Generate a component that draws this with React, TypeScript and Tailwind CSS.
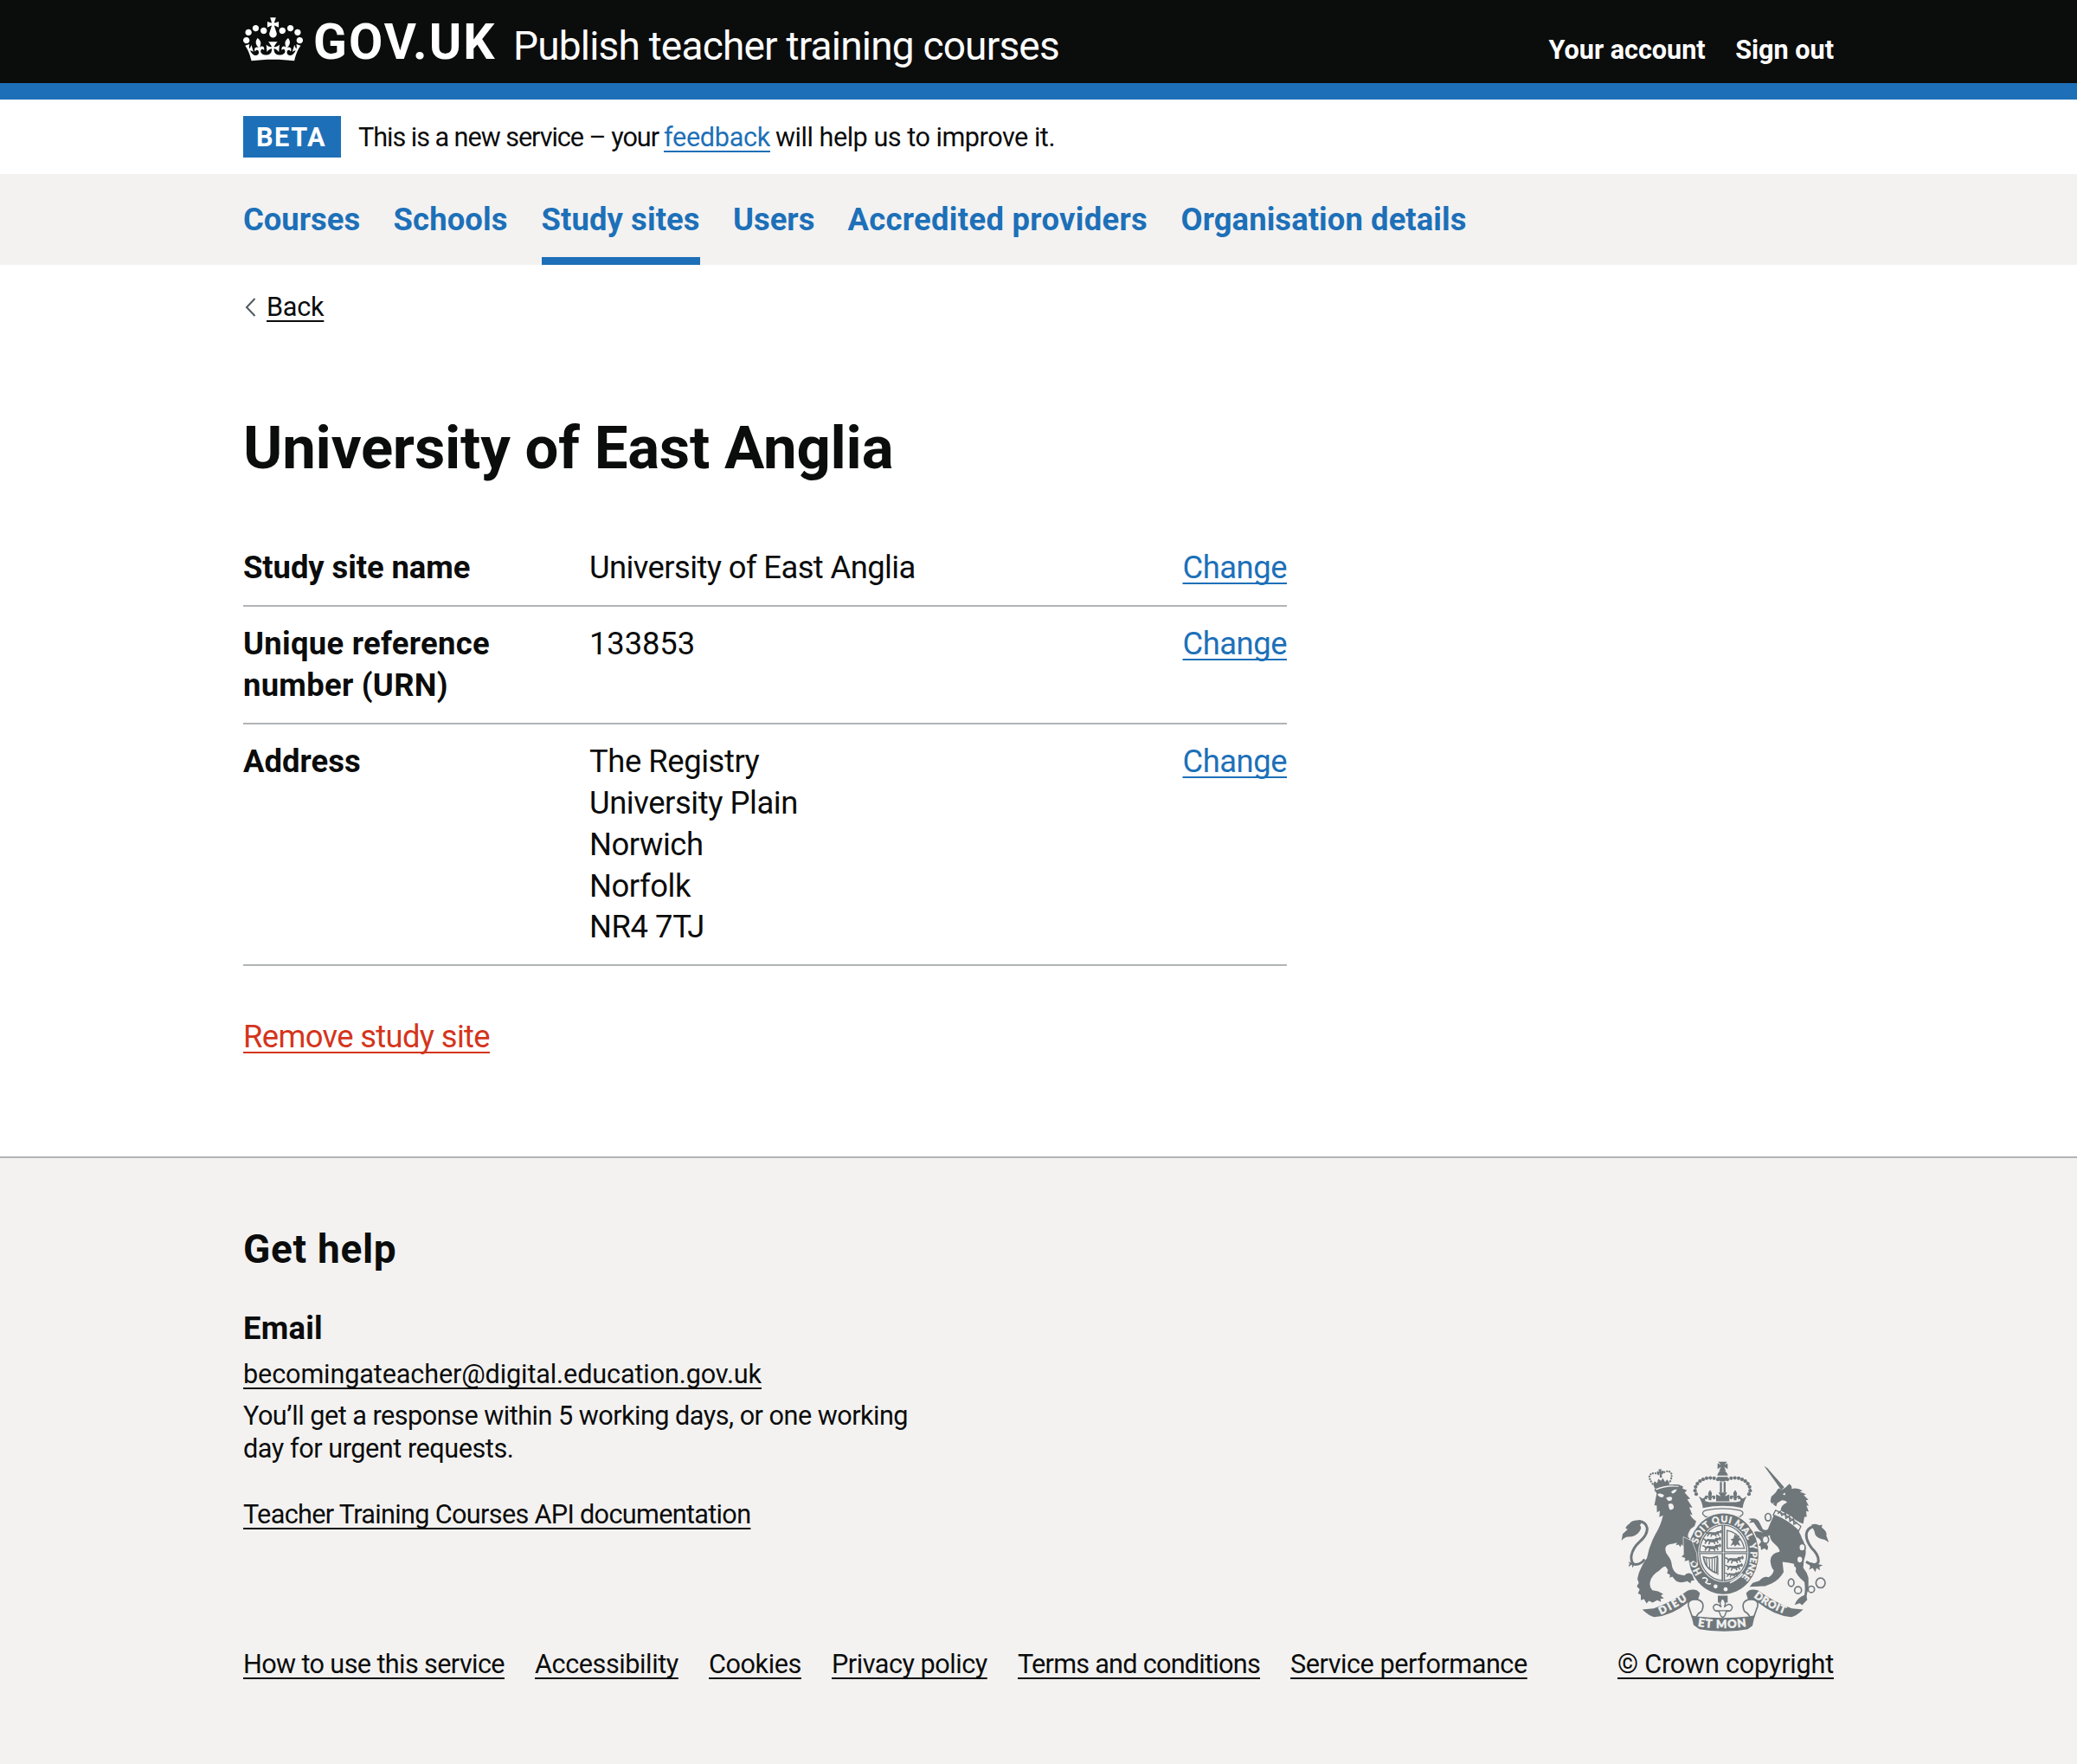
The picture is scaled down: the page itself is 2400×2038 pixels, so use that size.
import type { ReactNode } from 'react';

const ROYAL_CROWN =
  'M25 30.2c3.5 1.5 7.7-.2 9.1-3.7 1.5-3.6-.2-7.8-3.9-9.2-3.6-1.4-7.6.3-9.1 3.9-1.4 3.5.3 7.5 3.9 9zM9 39.5c3.6 1.5 7.8-.2 9.2-3.7 1.5-3.6-.2-7.8-3.9-9.1-3.6-1.5-7.6.2-9.1 3.8-1.4 3.5.3 7.5 3.8 9zM4.4 57.2c3.5 1.5 7.7-.2 9.1-3.8 1.5-3.6-.2-7.7-3.9-9.1-3.5-1.5-7.6.3-9.1 3.8-1.4 3.5.3 7.6 3.9 9.1zm38.3-21.4c3.5 1.5 7.7-.2 9.1-3.8 1.5-3.6-.2-7.7-3.9-9.1-3.6-1.5-7.6.3-9.1 3.8-1.3 3.6.4 7.7 3.9 9.1zm64.4-5.6c-3.6 1.5-7.8-.2-9.1-3.7-1.5-3.6.2-7.8 3.8-9.2 3.6-1.4 7.7.3 9.2 3.9 1.3 3.5-.4 7.5-3.9 9zm15.9 9.3c-3.6 1.5-7.7-.2-9.1-3.7-1.5-3.6.2-7.8 3.7-9.1 3.6-1.5 7.7.2 9.2 3.8 1.5 3.5-.3 7.5-3.8 9zm4.7 17.7c-3.6 1.5-7.8-.2-9.2-3.8-1.5-3.6.2-7.7 3.9-9.1 3.6-1.5 7.7.3 9.2 3.8 1.3 3.5-.4 7.6-3.9 9.1zM89.3 35.8c-3.6 1.5-7.8-.2-9.2-3.8-1.4-3.6.2-7.7 3.9-9.1 3.6-1.5 7.7.3 9.2 3.8 1.4 3.6-.3 7.7-3.9 9.1zM69.7 17.7l8.9 4.7V9.3l-8.9 2.8c-.2-.3-.5-.6-.9-.9L72.4 0H59.6l3.5 11.2c-.3.3-.6.5-.9.9l-8.8-2.8v13.1l8.8-4.7c.3.3.6.7.9.9l-5 15.4v.1c-.2.8-.4 1.6-.4 2.4 0 4.1 3.1 7.5 7 8.1h.2c.3 0 .7.1 1 .1.4 0 .7 0 1-.1h.2c4-.6 7.1-4.1 7.1-8.1 0-.8-.1-1.7-.4-2.4V34l-5.1-15.4c.4-.2.7-.6 1-.9zM66 92.8c16.9 0 32.8 1.1 47.1 3.2 4-16.9 8.9-26.7 14-33.5l-9.6-3.4c1 4.9 1.1 7.2 0 10.2-1.5-1.4-3-4.3-4.2-8.7L108.6 76c2.8-2 5-3.2 7.5-3.3-4.4 9.4-10 11.9-13.6 11.2-4.3-.8-6.3-4.6-5.6-7.9 1-4.7 5.7-5.9 8-.5 4.3-8.7-3-11.4-7.6-8.8 7.1-7.2 7.9-13.5 2.1-21.1-8 6.1-8.1 12.3-4.5 20.8-4.7-5.4-12.1-2.5-9.5 6.2 3.4-5.2 7.9-2 7.2 3.1-.6 4.3-6.4 7.8-13.5 7.2-10.3-.9-10.9-8-11.2-13.8 2.5-.5 7.1 1.8 11 7.3L80.2 60c-4.1 4.4-8 5.3-12.3 5.4 1.4-4.4 8-11.6 8-11.6H55.5s6.4 7.2 7.9 11.6c-4.2-.1-8-1-12.3-5.4l1.4 16.4c3.9-5.5 8.5-7.7 10.9-7.3-.3 5.8-.9 12.8-11.1 13.8-7.2.6-12.9-2.9-13.5-7.2-.7-5 3.8-8.3 7.1-3.1 2.7-8.7-4.6-11.6-9.4-6.2 3.7-8.5 3.6-14.7-4.6-20.8-5.8 7.6-5 13.9 2.2 21.1-4.7-2.6-11.9.1-7.7 8.8 2.3-5.5 7.1-4.2 8.1.5.7 3.3-1.3 7.1-5.7 7.9-3.5.7-9-1.8-13.5-11.2 2.5.1 4.7 1.3 7.5 3.3l-4.7-15.4c-1.2 4.4-2.7 7.2-4.3 8.7-1.1-3-.9-5.3 0-10.2l-9.5 3.4c5 6.9 9.9 16.7 14 33.5 14.8-2.1 30.8-3.2 47.7-3.2z';

const INK = '#6f777b';
const PAPER = '#f3f2f1';

const archDots: [number, number][] = [
  [376, 119], [363, 115], [350, 114], [337, 115], [325, 119], [314, 125], [305, 134], [299, 145], [297, 158], [301, 170],
];

const chain: [number, number, number, number][] = [
  [550, 250, 10, 13],
  [541, 328, 11, 13],
  [668, 355, 11, 13],
  [630, 477, 10, 13],
  [654, 503, 12, 12],
  [700, 500, 11, 11],
  [732, 478, 16, 17],
];

function Fleur({ x, y, s }: { x: number; y: number; s: number }) {
  return (
    <path
      transform={`translate(${x} ${y}) scale(${s})`}
      d="M0-20c6 7 8 13 3 22 6-8 14-6 14 1 0 5-5 8-9 5 2-2 2-4 0-5-3 0-4 5-4 9h-8c0-4-1-9-4-9-2 1-2 3 0 5-4 3-9 0-9-5 0-7 8-9 14-1-5-9-3-15 3-22z"
    />
  );
}

function Walker({ x, y, s = 1 }: { x: number; y: number; s?: number }) {
  return (
    <g transform={`translate(${x} ${y}) scale(${s})`} fill="none" stroke={INK} strokeWidth="5" strokeLinecap="round">
      <path d="M0 4q8-8 16 0t24-2M4 4l-6 9M16 5l-4 10M28 4l5 10M39 2l5 9M40 2q8-6 12-10q4 4 0 8" />
      <path d="M0 4q-3-7-10-7" />
      <path d="M8 2h26" strokeWidth="8" />
      <path d="M38-2h6" strokeWidth="9" />
    </g>
  );
}

function CoatOfArms() {
  return (
    <svg viewBox="40 56 720 590" className="h-[197px] w-[240px]" fill={INK} aria-hidden="true">
      <defs>
        <path id="garter-top" d="M305.6 343.3A94 109 0 0 1 482 336" />
        <path id="garter-right" d="M484.4 343.3A94 109 0 0 1 451 466" />
        <path id="garter-left" d="M321 444A94 109 0 0 1 301.5 388" />
        <path id="scroll-left" d="M178 588Q228 566 284 528" />
        <path id="scroll-right" d="M500 526Q550 566 616 588" />
        <path id="scroll-mid" d="M306 628Q392 642 480 627" />
      </defs>

      {/* lion */}
      <path d="M163 148q34-14 78-11l15 7-3 7 16 6-8 8 19 21-10 2 18 29-11-1 11 27-9-4q6 14 22 25l-6 17q-22 12-23 36l34 38q-8 20 7 44l-14-10-12 9-2-11-15 4 2-12-13-4 8-9q-3-10-17-22l-4 10-6-9-9 2 3-9-13 4q-22 1-26 13-4 14 8 28 12 14 14 36 4 20 21 29l22 4q8-10 20-7l18 10-8 4 5 10-11 1-3 9-11-7q-24 9-39-1l-13-15-9 4 1-11-10-4 3-12-8-12q-10 0-22 14-28 16-32 40-3 18 8 28l20 4 18 10-9 4 11 11-12 1 2 11-13-6-16 8-13-6-8 9-9-15-11 4 0-18-10-6 6-14-10-10 7-12-5-14 5-20q14-36 28-52 8-44 30-84 18-28 26-64l-13 6 2-22-10 5-1-24-8 0 8-42-8-10q2-14 16-12z" />
      <path d="M122 396q-12 18-32 18-16-3-14-30 5-28 30-50 26-22 25-46-4-22-30-24" fill="none" stroke={INK} strokeWidth="9" />
      <path d="M104 260q-28 0-34 12-24 18-6 20l-18 16-4 24q10-14 24-14 26 0 38-18 10-14 2-22 8-10 2-18zM64 404l24 8-8 14-2-12-12 8 4-12z" />
      <g transform="rotate(-8 178 120)">
        <path d="M150 134l6-12 8 8 6-14 8 8 8-8 6 14 8-8 6 12-3 12h-50z" />
        <g fill="none" stroke={INK} strokeWidth="7" strokeLinecap="round" strokeDasharray="0.1 9">
          <path d="M148 130q-20-36 12-36l18 8" />
          <path d="M210 130q20-36-12-36l-20 8" />
        </g>
        <path d="M174 84h12l-3 8 8-3v10l-8-2 1 16h-8l1-16-8 2v-10l8 3z" />
      </g>
      <g fill={PAPER}>
        <path d="M166 172q10-9 24 3l-4 5q-10 5-20-8zM214 162q10-10 20-8-4 12-16 14zM196 184q12-8 22-2l-3 10-10 2zM204 206q8-6 14-2 8 8 4 16-8 8-14 2z" />
        <path d="M160 152q36-16 80-10v3q-40-4-78 11z" />
      </g>

      {/* unicorn */}
      <path d="M536 72l12 8 58 66-10 10z" />
      <path d="M596 156l14-8 14-14q10 8 8 18 18-6 38 6l-10 4 22 8-8 4 16 16-9 1 10 20-8-2 8 22-9-2 2 20-8 0-4 24q-24-8-42-26l-36-20q-2-16 22-28-4-8-18-8l-16 10-4 12-11-8 5-6-8 4-6-7 3-17q16-12 20-22 8-14 15-1z" />
      <path d="M600 170l10-5-1 9z" fill={PAPER} />
      <path d="M572 238L552 285Q548 300 532 292L520 268Q512 250 482 256L492 262 484 270 500 268 512 286Q520 300 534 304 495 292 497 312L496 325 506 318Q524 324 526 336L516 348 524 350 526 364 538 358Q550 372 550 352L546 344 536 338Q532 326 528 318 545 322 556 312 556 330 575 345 590 356 590 370 560 375 558 400 560 425 570 435 566 450 552 458 535 452 520 470L497 478 486 491 540 489 562 480Q590 466 604 440L600 405Q625 408 640 412 640 440 662 462L676 475Q680 500 676 520 650 530 642 554L660 548 668 555 686 536Q680 520 690 500L690 460Q685 440 672 425 672 400 680 380 684 350 668 325 660 300 646 285 610 258 572 238Z" />
      <path d="M576 226q42 16 88 56l-8 16q-38-38-88-56z" fill={PAPER} stroke={INK} strokeWidth="4" />
      <path d="M584 238l8-8 6 14 12-8 2 18 12-8 2 18 12-8 2 18 10-4" fill="none" stroke={INK} strokeWidth="5" />
      <path d="M682 404q30 20 42 2 4-24-22-48-26-34-17-58 12-24 38-14" fill="none" stroke={INK} strokeWidth="9" />
      <path d="M700 276q16-6 28 2l10-2-2 10q20 14 16 28l9 24q-12-12-24-12-24-4-26-26zM690 406l50 10-12 6 2 12-12-8-4 14-9-14-13 6 4-10z" />
      <g fill={PAPER} stroke={INK} strokeWidth="5">
        {chain.map(([cx, cy, rx, ry]) => (
          <ellipse key={`${cx}-${cy}`} cx={cx} cy={cy} rx={rx} ry={ry} />
        ))}
      </g>
      <g fill={PAPER}>
        <ellipse cx="660" cy="397" rx="8" ry="10" />
        <ellipse cx="639" cy="430" rx="8" ry="9" />
        <ellipse cx="668" cy="355" rx="7" ry="9" />
      </g>

      {/* royal crown */}
      <path d="M377 58h31l-9 11 11-6v20l-12-7 6 15h-24l7-15-12 7V63l12 6z" />
      <path d="M374 106q2-17 18-17t19 17z M374 110h37l-10 16h-18z" />
      <path d="M383 128h7v36h-7zM396 128h7v36h-7z" />
      {archDots.map(([x, y]) => (
        <g key={`${x}-${y}`}>
          <circle cx={x} cy={y} r="6.3" />
          <circle cx={785 - x} cy={y} r="6.3" />
        </g>
      ))}
      <Fleur x={349} y={178} s={1.1} />
      <Fleur x={436} y={178} s={1.1} />
      <path d="M378 164h30l-8 14 16-7v24h-46v-24l16 7zM310 178l14 8 8-6 0 14 14 4h94l14-4 0-14 8 6 14-8q-12 22-14 40-70-14-138 0-2-18-14-40z" />
      <path d="M334 226q58-12 118 0 14 4 10 14l-10 9H334l-10-9q-3-10 10-14z" fill={PAPER} stroke={INK} strokeWidth="4" />

      {/* garter and shield */}
      <ellipse cx="395" cy="377" rx="126" ry="143" fill={PAPER} />
      <ellipse cx="395" cy="377" rx="122" ry="140" />
      <ellipse cx="395" cy="374" rx="87" ry="101" fill={PAPER} />
      <ellipse cx="395" cy="374" rx="82" ry="96" fill="none" stroke={INK} strokeWidth="4" />
      <path d="M389 278h12v194h-12zM312 368h166v10H312z" />
      <path d="M394 278h2v194h-2zM312 372h166v2H312z" fill={PAPER} />
      <Walker x={342} y={304} s={0.85} />
      <Walker x={334} y={328} s={0.95} />
      <Walker x={334} y={352} s={0.95} />
      <Walker x={412} y={394} s={0.95} />
      <Walker x={412} y={420} s={0.9} />
      <Walker x={410} y={446} s={0.75} />
      <path d="M408 296q46 8 60 62h-60z" fill="none" stroke={INK} strokeWidth="4" />
      <path d="M420 350l8-16-8-8 10-2 4-14 8 6 8-4-3 10 8 6-8 6 8 16-12-6-8 8-4-8z" />
      <path d="M326 388q24 8 48-2l-2 58q-40-14-46-56z" fill="none" stroke={INK} strokeWidth="5" />
      <path d="M336 392l2 24M346 394l2 34M356 394v42M365 392v48M376 390v60" fill="none" stroke={INK} strokeWidth="3.5" />
      <g fill={PAPER} stroke={PAPER} strokeWidth="1" className="font-['Lato'] text-[32px] font-black">
        <text>
          <textPath href="#garter-top" textLength="236">SOIT QUI MAL</textPath>
        </text>
        <text>
          <textPath href="#garter-right" textLength="124">Y PENSE</textPath>
        </text>
        <text>
          <textPath href="#garter-left" textLength="52">HO</textPath>
        </text>
      </g>
      <path d="M322 462q14-6 18 6l-6 8q8 8 18 4M418 478q28-14 44-32" fill="none" stroke={PAPER} strokeWidth="5" />
      <circle cx="368" cy="490" r="7" fill={PAPER} />
      <circle cx="403" cy="500" r="7" fill={PAPER} />
      <path d="M256 318l30 14 17 44 2 36-14-10-14 9-2-11-15 4 2-12-13-4 8-9z" stroke={PAPER} strokeWidth="2" />

      {/* motto scroll */}
      <path d="M114 570l40-4q64-22 118-62 30-10 42 10l-8 26-34 6q-56 46-116 50-14 0-42-26z" />
      <path d="M672 570l-40-4q-64-22-116-62-30-10-42 10l8 26 34 6q56 46 114 50 14 0 42-26z" />
      <g fill={PAPER} stroke={INK} strokeWidth="5">
        <path d="M306 536q-36-4-32 22l14 40q8 10 14-4 4-10 18-18 14-32-14-40z" />
        <path d="M482 536q36-4 32 22l-14 40q-8 10-14-4-4-10-18-18-14-32 14-40z" />
      </g>
      <path d="M284 590l18 4q88 10 182 0l20-4-8 36-16 12q-80 16-168 0l-20-14z" />
      <path d="M376 522h34v24h-34z" />
      <g fill={PAPER} stroke={INK} strokeWidth="4">
        <path d="M392 530q16 18 6 32 20-20 28 0-2 16-20 14l-6 16-7 6-7-6-6-16q-18 2-20-14 8-20 28 0-10-14 4-32zM370 574h46" />
      </g>
      <g fill={PAPER} stroke={PAPER} strokeWidth="1.5" className="font-['Lato'] text-[36px] font-black">
        <text>
          <textPath href="#scroll-left" textLength="106">DIEU</textPath>
        </text>
        <text>
          <textPath href="#scroll-right" textLength="122">DROIT</textPath>
        </text>
        <text className="text-[39px]">
          <textPath href="#scroll-mid" textLength="170">ET MON</textPath>
        </text>
      </g>
    </svg>
  );
}

function Link({ children, className = '' }: { children: ReactNode; className?: string }) {
  return (
    <a
      href="#"
      className={`whitespace-nowrap underline decoration-2 underline-offset-[5px] [text-decoration-skip-ink:none] ${className}`}
    >
      {children}
    </a>
  );
}

const navItems = [
  { label: 'Courses', cls: 'w-[135px]' },
  { label: 'Schools', cls: 'w-[132.5px] tracking-[0.004em]' },
  { label: 'Study sites', cls: 'w-[183px] tracking-[0.003em]', current: true },
  { label: 'Users', cls: 'w-[94px]' },
  { label: 'Accredited providers', cls: 'w-[346.5px] tracking-[0.0085em]' },
  { label: 'Organisation details', cls: 'w-[330px] tracking-[0.0023em]' },
];

const rows = [
  { key: ['Study site name'], keyCls: 'tracking-[-0.002em]', value: ['University of East Anglia'], valueCls: 'tracking-[-0.0165em]' },
  { key: ['Unique reference', 'number (URN)'], keyCls: 'tracking-[0.008em]', value: ['133853'], valueCls: 'tracking-[-0.003em]' },
  {
    key: ['Address'],
    keyCls: 'tracking-[0.001em]',
    value: ['The Registry', 'University Plain', 'Norwich', 'Norfolk', 'NR4 7TJ'],
    valueCls: 'tracking-[-0.012em]',
  },
];

const footerLinks = [
  { label: 'How to use this service', cls: 'w-[337px] tracking-[-0.0202em]' },
  { label: 'Accessibility', cls: 'w-[201px] tracking-[-0.014em]' },
  { label: 'Cookies', cls: 'w-[142px] tracking-[-0.014em]' },
  { label: 'Privacy policy', cls: 'w-[215px] tracking-[-0.016em]' },
  { label: 'Terms and conditions', cls: 'w-[315px] tracking-[-0.0243em]' },
  { label: 'Service performance', cls: 'tracking-[-0.015em]' },
];

export default function App() {
  return (
    <div className="flex h-[2038px] flex-col overflow-hidden bg-white font-['Roboto',sans-serif] text-[#0b0c0c]">
      <header className="h-[115px] border-b-[19px] border-[#1d70b8] bg-[#0b0c0c] text-white">
        <div className="mx-auto flex w-[1838px] items-start">
          <svg viewBox="0 0 132 97" className="mt-5 h-[51px] w-[69px]" fill="currentColor" aria-hidden="true">
            <path fillRule="evenodd" d={ROYAL_CROWN} />
          </svg>
          <span className="ml-3 mt-[19px] w-[231px] text-[57px] font-bold leading-[60px] tracking-[0.037em]">GOV.UK</span>
          <span className="mt-7 whitespace-nowrap text-[46px] leading-[50px] tracking-[-0.0175em]">Publish teacher training courses</span>
          <nav className="ml-auto mt-[38px] flex gap-[34.5px] text-[30.63px] font-bold leading-[40px] tracking-[-0.001em]">
            <a href="#">Your account</a>
            <a href="#">Sign out</a>
          </nav>
        </div>
      </header>

      <div className="mx-auto flex h-[86px] w-[1838px] items-start pt-[19px] text-[30.63px] leading-[48px]">
        <strong className="h-12 w-[113px] bg-[#1d70b8] pl-[15px] pt-px font-bold tracking-[0.05em] text-white">BETA</strong>
        <span className="ml-5 w-[353px] whitespace-nowrap pt-px tracking-[-0.0343em]">This is a new service – your</span>
        <Link className="w-[129px] pt-px tracking-[-0.01em] text-[#1d70b8]">feedback</Link>
        <span className="whitespace-nowrap pt-px tracking-[-0.016em]">will help us to improve it.</span>
      </div>

      <nav className="h-[105px] bg-[#f3f2f1] text-[36.4px] font-bold leading-[40px] text-[#1d70b8]">
        <div className="mx-auto flex h-full w-[1838px] gap-[38.5px]">
          {navItems.map((item) => (
            <a
              key={item.label}
              href="#"
              className={`h-full whitespace-nowrap pt-[33px] ${item.cls} ${item.current ? 'border-b-[9px] border-[#1d70b8]' : ''}`}
            >
              {item.label}
            </a>
          ))}
        </div>
      </nav>

      <main className="mx-auto h-[1030px] w-[1838px]">
        <div className="flex items-center pt-[29px] text-[30.63px] leading-[40px]">
          <svg viewBox="0 0 13 22" className="-mt-px ml-[2px] mr-3 h-[22px] w-[13px]" fill="none" stroke="#505a5f" strokeWidth="2">
            <path d="M11.5 1 2 11l9.5 10" />
          </svg>
          <Link className="tracking-[-0.008em]">Back</Link>
        </div>

        <h1 className="mt-[105px] text-[68.9px] font-bold leading-[76px] tracking-[-0.003em]">University of East Anglia</h1>

        <dl className="mt-[76.3px] w-[1206px] text-[36.4px] leading-[47.87px]">
          {rows.map((row, i) => (
            <div key={row.key[0]} className={`flex border-b-2 border-[#b1b4b6] pb-[19px] ${i > 0 ? 'pt-[19px]' : ''}`}>
              <dt className={`w-[400px] font-bold ${row.keyCls}`}>
                {row.key.map((line) => (
                  <div key={line}>{line}</div>
                ))}
              </dt>
              <dd className={row.valueCls}>
                {row.value.map((line) => (
                  <div key={line}>{line}</div>
                ))}
              </dd>
              <dd className="ml-auto">
                <Link className="tracking-[-0.0131em] text-[#1d70b8]">Change</Link>
              </dd>
            </div>
          ))}
        </dl>

        <div className="mt-[58px] text-[36.4px] leading-[48px]">
          <Link className="tracking-[-0.0181em] text-[#d4351c]">Remove study site</Link>
        </div>
      </main>

      <footer className="flex-1 border-t-2 border-[#b1b4b6] bg-[#f3f2f1]">
        <div className="mx-auto w-[1838px] pt-[76px] text-[30.63px] leading-[38.3px]">
          <h2 className="text-[46px] font-bold leading-[58px] tracking-[0.015em]">Get help</h2>
          <h3 className="mt-[39px] text-[36.4px] font-bold leading-[48px] tracking-[0.007em]">Email</h3>
          <div className="mt-[10px]">
            <Link className="tracking-[-0.0045em]">becomingateacher@digital.education.gov.uk</Link>
          </div>
          <p className="mt-[9.6px] whitespace-nowrap">
            <span className="tracking-[-0.0168em]">You’ll get a response within 5 working days, or one working</span>
            <br />
            <span className="tracking-[-0.015em]">day for urgent requests.</span>
          </p>
          <div className="flex h-[211px] items-start justify-between">
            <Link className="mt-[37.6px] tracking-[-0.0221em]">Teacher Training Courses API documentation</Link>
            <div className="-mt-[5px] mr-[6px]">
              <CoatOfArms />
            </div>
          </div>
          <div className="flex">
            {footerLinks.map((item) => (
              <div key={item.label} className={item.cls}>
                <Link>{item.label}</Link>
              </div>
            ))}
            <Link className="ml-auto tracking-[-0.0069em]">© Crown copyright</Link>
          </div>
        </div>
      </footer>
    </div>
  );
}
